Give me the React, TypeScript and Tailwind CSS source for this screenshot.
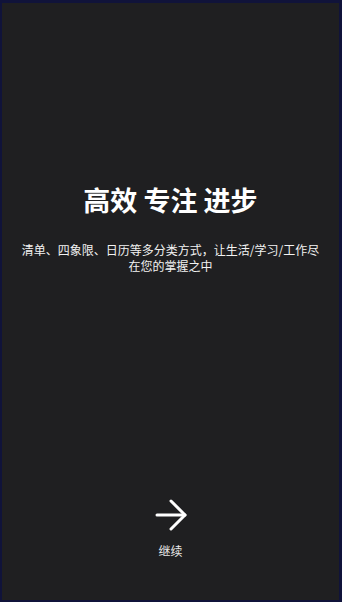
const ArrowIcon = () => (
	<svg width="32" height="32" viewBox="0 0 32 32" fill="none" stroke="currentColor" strokeWidth="3" strokeLinecap="round" strokeLinejoin="round">
		<path d="M2 16H30" />
		<path d="M16 2 30 16 16 30" />
	</svg>
);

const App = () => {
	return (
		<main
			className="flex h-[602px] w-full flex-col items-center border-t-[3px] border-r-[3px] border-b-2 border-l-2 border-[#10133a] bg-[#1f1f21] text-white"
			style={{ fontFamily: '"Noto Sans CJK SC", "Noto Sans", sans-serif' }}
		>
			<h1 className="mt-[181px] font-bold text-[27px] leading-8">高效 专注 进步</h1>
			<p className="mt-[26px] px-[18px] text-center text-xs leading-4 text-[#f2f2f2]">
				清单、四象限、日历等多分类方式，让生活/学习/工作尽在您的掌握之中
			</p>
			<button type="button" className="mt-auto mb-[41px] flex flex-col items-center gap-3 text-white">
				<ArrowIcon />
				<span className="text-xs leading-4 text-[#e8e8e8]">继续</span>
			</button>
		</main>
	);
};

export default App;
